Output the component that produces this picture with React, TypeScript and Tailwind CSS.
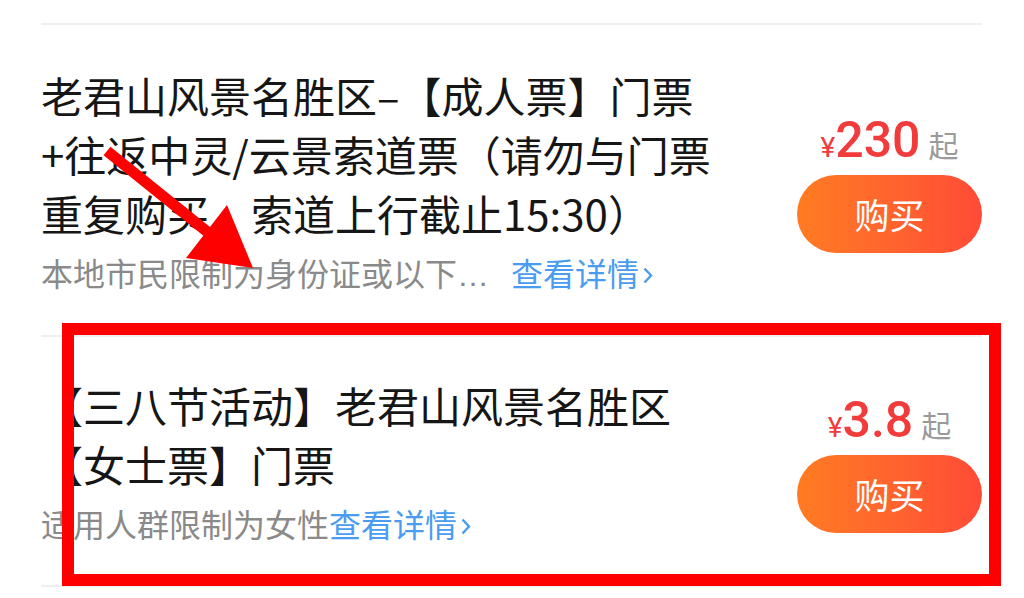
import React from "react";

type Ticket = {
  lines: string[];
  note: React.ReactNode;
  price: string;
  rowPad: string;
  priceTop: string;
};

const Chevron = () => (
  <svg className="inline-block ml-[4px] align-middle -mt-[4px]" width="10" height="17" viewBox="0 0 10 17">
    <path d="M1.5 1.5 L8 8.5 L1.5 15.5" fill="none" stroke="#4a9cf0" strokeWidth="2.4" />
  </svg>
);

const tickets: Ticket[] = [
  {
    lines: [
      "老君山风景名胜区–【成人票】门票",
      "+往返中灵/云景索道票（请勿与门票",
      "重复购买，索道上行截止15:30）",
    ],
    note: (
      <>
        <span className="text-[#8a8a8a]">本地市民限制为身份证或以下</span>
        <span className="text-[#8a8a8a] font-['Liberation_Sans',sans-serif]">…</span>
        <span className="ml-[22px] text-[#4a9cf0]">
          查看详情
          <Chevron />
        </span>
      </>
    ),
    price: "230",
    rowPad: "pt-[40px] pb-[43px]",
    priceTop: "mt-[50px]",
  },
  {
    lines: ["【三八节活动】老君山风景名胜区", "【女士票】门票"],
    note: (
      <>
        <span className="text-[#8a8a8a]">适用人群限制为女性</span>
        <span className="text-[#4a9cf0]">
          查看详情
          <Chevron />
        </span>
      </>
    ),
    price: "3.8",
    rowPad: "pt-[38px] pb-[42px]",
    priceTop: "mt-[20px]",
  },
];

function TicketRow({ t }: { t: Ticket }) {
  return (
    <div className={`flex items-start justify-between border-b-2 border-[#efefef] ${t.rowPad}`}>
      <div className="flex flex-col gap-[10px]">
        <div className="text-[42px] leading-[59px] text-[#161616] whitespace-nowrap">
          {t.lines.map((l, i) => (
            <div key={i}>{l}</div>
          ))}
        </div>
        <div className="h-[40px] text-[32px] leading-[40px] whitespace-nowrap">{t.note}</div>
      </div>

      <div className={`w-[185px] flex flex-col items-center gap-[10px] ${t.priceTop}`}>
        <div className="h-[50px] flex items-baseline justify-center text-[#f23b3b] font-['Roboto',sans-serif]">
          <span className="text-[28px]">¥</span>
          <span className="text-[50px] leading-[50px] font-medium">{t.price}</span>
          <span className="ml-[8px] text-[30px] text-[#9a9a9a] font-['Noto_Sans_CJK_SC',sans-serif]">起</span>
        </div>
        <button className="w-[185px] h-[78px] rounded-full bg-gradient-to-r from-[#ff7b21] to-[#ff4a36] text-white text-[35px]">
          购买
        </button>
      </div>
    </div>
  );
}

export default function App() {
  return (
    <div className="relative w-[1024px] h-[598px] bg-white overflow-hidden font-['Noto_Sans_CJK_SC',sans-serif]">
      <div className="pt-[23px] pl-[41px] pr-[42px]">
        <div className="border-t-2 border-[#efefef]" />
        {tickets.map((t, i) => (
          <TicketRow key={i} t={t} />
        ))}
      </div>

      {/* annotation marks */}
      <svg className="absolute inset-0 pointer-events-none" width="1024" height="598" viewBox="0 0 1024 598">
        <line x1="107" y1="151" x2="210" y2="234" stroke="#ff0000" strokeWidth="11" />
        <polygon points="227,205 186,258 253,268" fill="#ff0000" />
        <rect x="68" y="329" width="927" height="251" fill="none" stroke="#ff0000" strokeWidth="12" />
      </svg>
    </div>
  );
}
